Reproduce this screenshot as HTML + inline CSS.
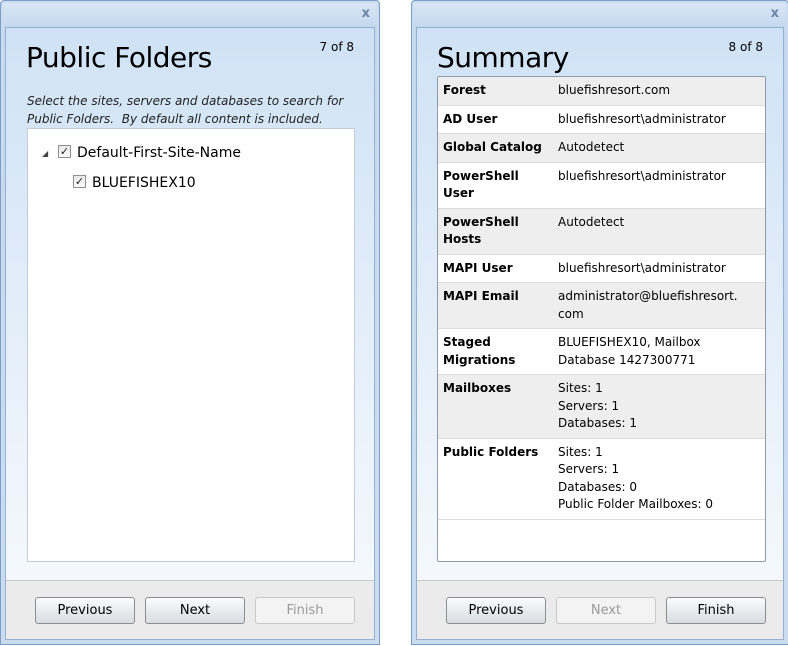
<!DOCTYPE html>
<html><head><style>
*{margin:0;padding:0;box-sizing:border-box}
body{width:788px;height:646px;background:#fff;position:relative;overflow:hidden;font-family:"DejaVu Sans","Liberation Sans",sans-serif;font-size:12px;color:#000}
.win{position:absolute;top:0;width:380px;height:645px;border:1px solid #7a9cc6;border-radius:4px 4px 0 0;background:linear-gradient(#dbe8f6,#c4d8ee 26px,#c9dcf0);box-shadow:inset 0 0 0 2px #c9dcf0}
.x{position:absolute;top:5px;right:9px;color:#6b86a6;font-size:13px;font-weight:bold}
.inner{position:absolute;left:4px;top:26px;right:4px;bottom:4px;border:1px solid #95b2d4;background:linear-gradient(#cfe2f5,#e4eef9 300px,#f4f8fc 550px);}
.foot{position:absolute;left:0;right:0;bottom:0;height:59px;background:#ebebeb;border-top:1px solid #c6c6c6}
h1{position:absolute;left:20px;top:13px;font-weight:normal;font-size:28px;font-family:"DejaVu Sans",sans-serif;letter-spacing:-0.5px}
.pg{position:absolute;right:20px;top:12px;font-size:12px}
.btn{position:absolute;top:16px;width:100px;height:27px;border:1px solid #8a8e93;border-radius:3px;background:linear-gradient(#fcfcfc,#e9ebee 50%,#d9dde2);text-align:center;line-height:25px;font-size:13px}
.dis{color:#9a9a9a;border-color:#c9c9c9;background:#f3f3f3}
.box{position:absolute;background:#fff;border:1px solid #c3ccd6}
.cb{position:absolute;width:13px;height:13px;border:1px solid #8f8f8f;background:linear-gradient(#e8e8e8,#fafafa);font-size:11px;line-height:11px;text-align:center;color:#222}
table{border-collapse:collapse;width:100%}
td{vertical-align:top;padding:5px 5px 5px 5px;line-height:17.5px;font-size:12px;border-bottom:1px solid #dcdcdc}
td.k{font-weight:bold;width:115px}
tr:nth-child(odd){background:#eeeeee}
</style></head><body>
<div class="win" style="left:0">
 <div class="x">x</div>
 <div class="inner">
  <h1>Public Folders</h1>
  <div class="pg">7 of 8</div>
  <div style="position:absolute;left:21px;top:64px;font-style:italic;font-size:12px;line-height:18px;color:#222">Select the sites, servers and databases to search for<br>Public Folders.&nbsp; By default all content is included.</div>
  <div class="box" style="left:21px;top:100px;width:328px;height:434px">
   <div style="position:absolute;left:14px;top:20px;font-size:8px;color:#444">◢</div>
   <div class="cb" style="left:30px;top:16px">✓</div>
   <div style="position:absolute;left:49px;top:16px;font-size:14px">Default-First-Site-Name</div>
   <div class="cb" style="left:45px;top:46px">✓</div>
   <div style="position:absolute;left:64px;top:46px;font-size:14px">BLUEFISHEX10</div>
  </div>
  <div class="foot">
   <div class="btn" style="left:29px">Previous</div>
   <div class="btn" style="left:139px">Next</div>
   <div class="btn dis" style="left:249px">Finish</div>
  </div>
 </div>
</div>
<div class="win" style="left:411px;width:378px">
 <div class="x">x</div>
 <div class="inner">
  <h1>Summary</h1>
  <div class="pg">8 of 8</div>
  <div class="box" style="left:20px;top:48px;width:329px;height:486px;border-color:#8e9aa8;border-radius:2px;overflow:hidden">
  <table>
   <tr><td class="k">Forest</td><td>bluefishresort.com</td></tr>
   <tr><td class="k">AD User</td><td>bluefishresort\administrator</td></tr>
   <tr><td class="k">Global Catalog</td><td>Autodetect</td></tr>
   <tr><td class="k">PowerShell<br>User</td><td>bluefishresort\administrator</td></tr>
   <tr><td class="k">PowerShell<br>Hosts</td><td>Autodetect</td></tr>
   <tr><td class="k">MAPI User</td><td>bluefishresort\administrator</td></tr>
   <tr><td class="k">MAPI Email</td><td>administrator@bluefishresort.<br>com</td></tr>
   <tr><td class="k">Staged<br>Migrations</td><td>BLUEFISHEX10, Mailbox<br>Database 1427300771</td></tr>
   <tr><td class="k">Mailboxes</td><td>Sites: 1<br>Servers: 1<br>Databases: 1</td></tr>
   <tr style="background:#fff"><td class="k">Public Folders</td><td>Sites: 1<br>Servers: 1<br>Databases: 0<br>Public Folder Mailboxes: 0</td></tr>
  </table>
  </div>
  <div class="foot">
   <div class="btn" style="left:29px">Previous</div>
   <div class="btn dis" style="left:139px">Next</div>
   <div class="btn" style="left:249px">Finish</div>
  </div>
 </div>
</div>
</body></html>
